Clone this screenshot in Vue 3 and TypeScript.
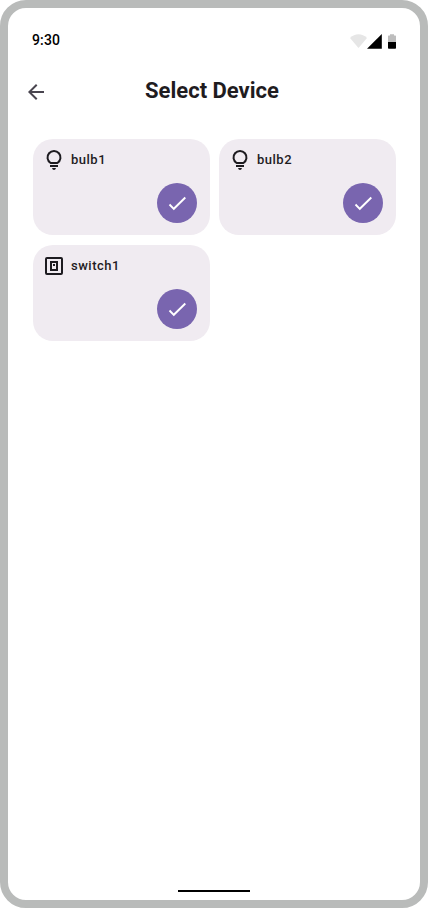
<script setup lang="ts">
interface Device {
  name: string
  kind: 'bulb' | 'switch'
}

const devices: Device[] = [
  { name: 'bulb1', kind: 'bulb' },
  { name: 'bulb2', kind: 'bulb' },
  { name: 'switch1', kind: 'switch' },
]
</script>

<template>
  <div class="phone">
    <header class="status">
      <span class="time">9:30</span>
      <svg class="indicators" width="48" height="16" viewBox="0 0 48 16">
        <path d="M1 4.1C6-.9 13-.9 18 4.1L9.5 14Z" fill="#e6e6e6" />
        <path d="M18 14.8L32.8.1V14.8Z" fill="#000" />
        <path d="M39 2q0-.6.6-.6H41V.2h4V1.4h1.4q.6 0 .6.6v6h-8Z" fill="#bdbdbd" />
        <path d="M39 8h8v6q0 .8-.8.8h-6.4q-.8 0-.8-.8Z" fill="#000" />
      </svg>
    </header>
    <nav class="topbar">
      <button class="back" aria-label="Back">
        <svg width="24" height="24" viewBox="0 0 24 24">
          <path d="M7.825 13L13.425 18.6L12 20L4 12L12 4L13.425 5.4L7.825 11H20V13Z" fill="#49454f" />
        </svg>
      </button>
      <h1>Select Device</h1>
    </nav>
    <main class="grid">
      <section v-for="device in devices" :key="device.name" class="card">
        <div class="label">
          <svg v-if="device.kind === 'bulb'" width="24" height="24" viewBox="0 0 24 24">
            <path d="M8.54 15A6.5 6.5 0 1 1 15.46 15Z" fill="none" stroke="#1d1b20" stroke-width="2" stroke-linejoin="round" />
            <path d="M8 17h8v2H8ZM10 20h4q-.5 2-2 2t-2-2Z" fill="#1d1b20" />
          </svg>
          <svg v-else width="24" height="24" viewBox="0 0 24 24" fill="none" stroke="#1d1b20" stroke-width="2">
            <rect x="4" y="4" width="16" height="16" rx="1" />
            <path d="M9 8h6v8H9ZM11 11h2" />
          </svg>
          <span>{{ device.name }}</span>
        </div>
        <button class="check" aria-label="Selected">
          <svg width="24" height="24" viewBox="0 0 24 24">
            <path d="M4.5 13.5L8.8 17.8L20.3 6.5" fill="none" stroke="#fff" stroke-width="1.9" />
          </svg>
        </button>
      </section>
    </main>
    <footer class="home"><span></span></footer>
  </div>
</template>

<style>
body {
  background: #fff;
}
</style>

<style scoped>
.phone {
  box-sizing: border-box;
  width: 428px;
  height: 908px;
  display: flex;
  flex-direction: column;
  border: 8px solid #b9bbba;
  border-radius: 26px;
  background: #fff;
  color: #1f1c1f;
  font-family: Roboto, sans-serif;
}
svg {
  display: block;
}
button {
  border: 0;
  padding: 0;
  background: none;
}
.status {
  height: 52px;
  box-sizing: border-box;
  padding: 22px 23px 0 24px;
  display: flex;
  justify-content: space-between;
}
.time {
  font-size: 14px;
  font-weight: 500;
  line-height: 20px;
  letter-spacing: 0.14px;
  color: #000;
}
.indicators {
  margin-top: 4px;
}
.topbar {
  height: 64px;
  padding: 0 20px 0 16px;
  display: grid;
  grid-template-columns: 24px 1fr 24px;
  align-items: center;
}
h1 {
  margin: 0;
  padding-bottom: 2px;
  font-size: 22px;
  font-weight: 700;
  line-height: 28px;
  text-align: center;
}
.grid {
  padding: 15px 24px 0 25px;
  display: grid;
  grid-template-columns: 177px 177px;
  grid-auto-rows: 96px;
  gap: 10px 9px;
}
.card {
  box-sizing: border-box;
  padding: 9px 13px 12px 9px;
  border-radius: 20px;
  background: #f0ebf1;
  display: flex;
  flex-direction: column;
  justify-content: space-between;
}
.label {
  display: flex;
  align-items: flex-start;
  gap: 5px;
  font-size: 13px;
  font-weight: 500;
  line-height: 24px;
  letter-spacing: 0.5px;
}
.check {
  width: 40px;
  height: 40px;
  border-radius: 50%;
  background: #7965af;
  align-self: flex-end;
  display: grid;
  place-items: center;
}
.home {
  margin-top: auto;
  padding-bottom: 8px;
  display: flex;
  justify-content: center;
}
.home span {
  width: 72px;
  height: 2px;
  background: #000;
}
</style>
